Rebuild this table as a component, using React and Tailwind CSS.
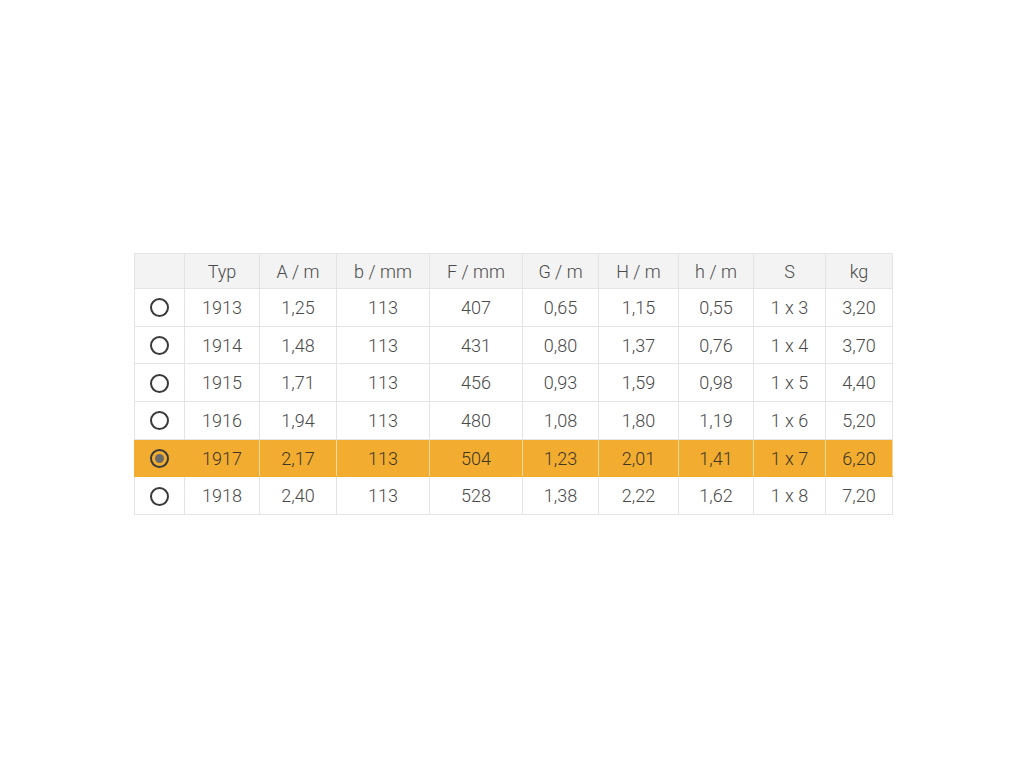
import React from "react";

const head = ["", "Typ", "A / m", "b / mm", "F / mm", "G / m", "H / m", "h / m", "S", "kg"];
const widths = [50, 75, 77, 93, 93, 76, 80, 75, 72, 67];
const rows = [
  ["1913", "1,25", "113", "407", "0,65", "1,15", "0,55", "1 x 3", "3,20"],
  ["1914", "1,48", "113", "431", "0,80", "1,37", "0,76", "1 x 4", "3,70"],
  ["1915", "1,71", "113", "456", "0,93", "1,59", "0,98", "1 x 5", "4,40"],
  ["1916", "1,94", "113", "480", "1,08", "1,80", "1,19", "1 x 6", "5,20"],
  ["1917", "2,17", "113", "504", "1,23", "2,01", "1,41", "1 x 7", "6,20"],
  ["1918", "2,40", "113", "528", "1,38", "2,22", "1,62", "1 x 8", "7,20"],
];

function Radio({ checked }) {
  return (
    <span className="inline-flex items-center justify-center w-[19px] h-[19px] rounded-full border-2 border-[#3a3a3a] align-middle">
      {checked && <span className="w-[9px] h-[9px] rounded-full bg-[#6a6a6a]" />}
    </span>
  );
}

export default function App() {
  return (
    <div className="w-[1024px] h-[768px] bg-white pt-[253px] pl-[134px]" style={{ fontFamily: "Roboto, 'Liberation Sans', sans-serif" }}>
      <table className="table-fixed border-collapse w-[758px] text-[18px] font-light text-[#4a4a4a]">
        <colgroup>
          {widths.map((w, i) => (
            <col key={i} style={{ width: w }} />
          ))}
        </colgroup>
        <thead>
          <tr className="h-[35px] bg-[#f3f3f3]">
            {head.map((h, i) => (
              <th key={i} className="border border-[#e4e4e4] font-light text-center p-0">
                {h}
              </th>
            ))}
          </tr>
        </thead>
        <tbody>
          {rows.map((r, ri) => {
            const sel = ri === 4;
            return (
              <tr key={ri} className={`h-[37.7px] ${sel ? "bg-[#f2ad30] text-[#3f3528]" : "bg-white"}`}>
                <td className={`border ${sel ? "border-[#f2ad30]" : "border-[#e4e4e4]"} text-center p-0 leading-none`}>
                  <Radio checked={sel} />
                </td>
                {r.map((c, ci) => (
                  <td key={ci} className={`border ${sel ? "border-[#f8d9a0] border-y-[#f2ad30]" : "border-[#e4e4e4]"} text-center p-0`}>
                    {c}
                  </td>
                ))}
              </tr>
            );
          })}
        </tbody>
      </table>
    </div>
  );
}
